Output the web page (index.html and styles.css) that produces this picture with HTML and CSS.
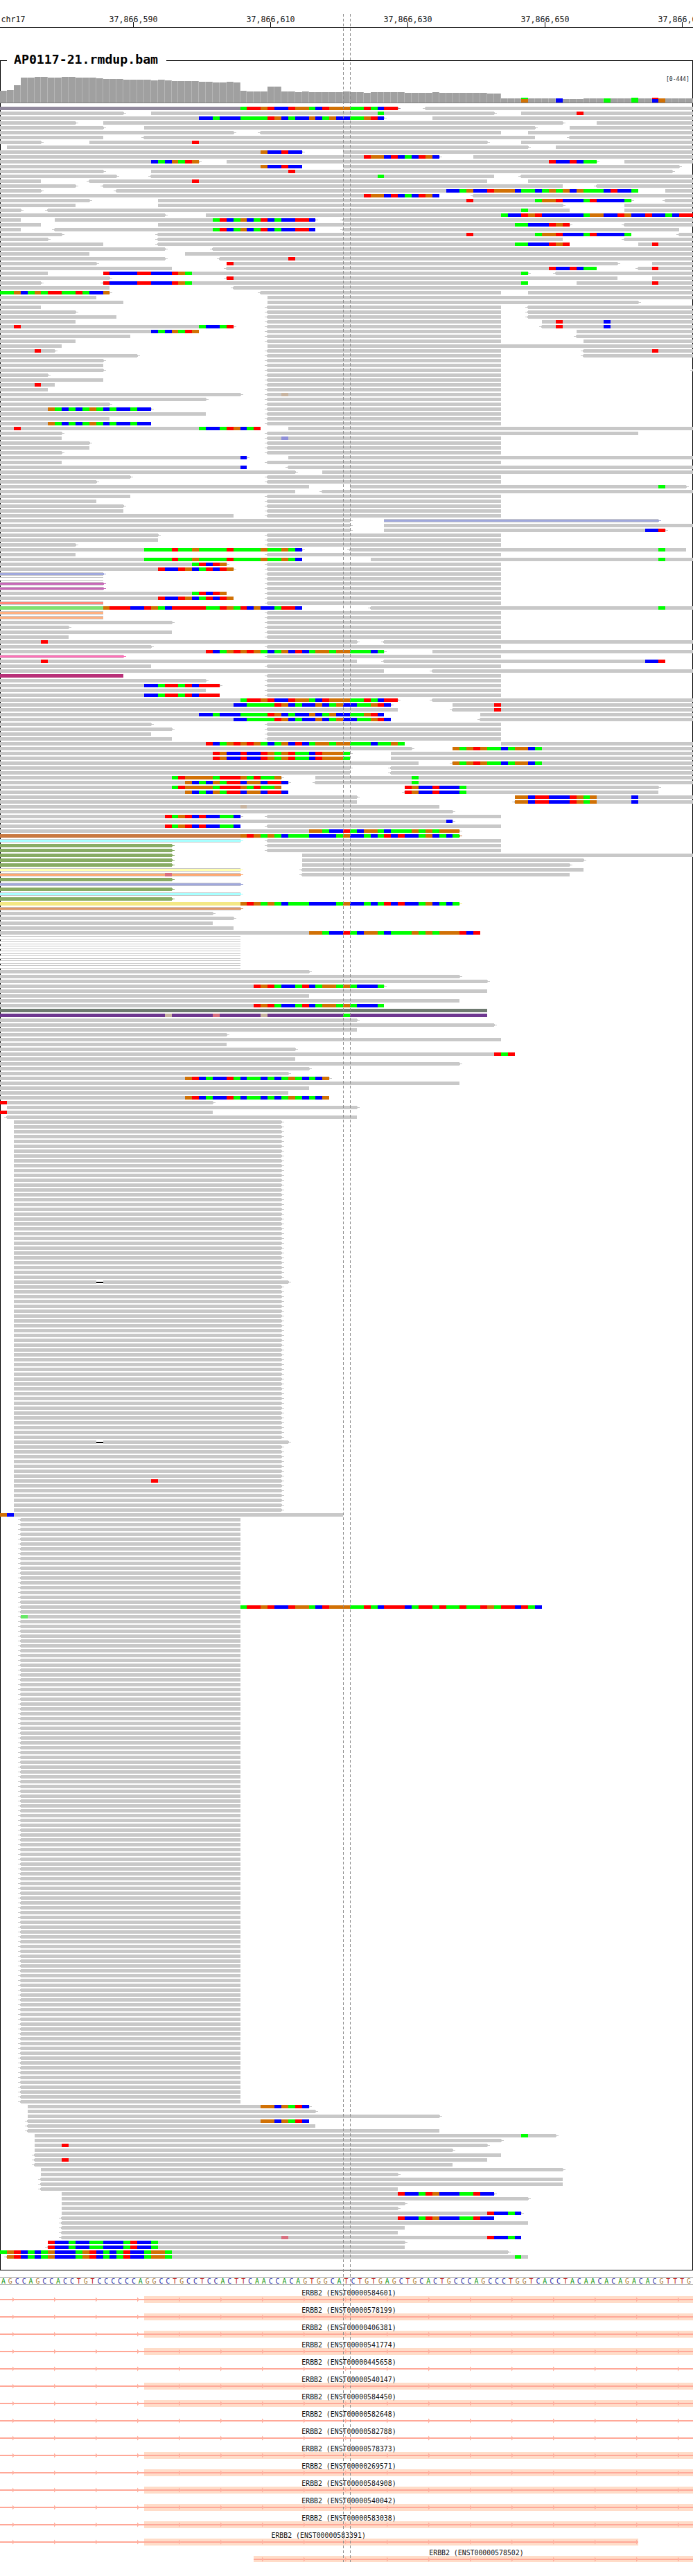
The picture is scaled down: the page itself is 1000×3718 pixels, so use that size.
FILE: index.html
```html
<!DOCTYPE html>
<html lang="en">
<head>
<meta charset="utf-8">
<title>IGV snapshot chr17</title>
<link rel="stylesheet" href="styles.css">
</head>
<body>
<main class="page">
  <svg class="ruler" width="1000" height="40" viewBox="0 0 1000 40">
    <text class="rtext" x="1.5" y="32">chr17</text>
    <g class="rticks">
      <text class="rtext mid" x="192.5" y="32">37,866,590</text><rect class="ink" x="192" y="32" width="1" height="7"/>
      <text class="rtext mid" x="390.5" y="32">37,866,610</text><rect class="ink" x="390" y="32" width="1" height="7"/>
      <text class="rtext mid" x="588.5" y="32">37,866,630</text><rect class="ink" x="588" y="32" width="1" height="7"/>
      <text class="rtext mid" x="786.5" y="32">37,866,650</text><rect class="ink" x="786" y="32" width="1" height="7"/>
      <text class="rtext mid" x="984.5" y="32">37,866,670</text><rect class="ink" x="984" y="32" width="1" height="7"/>
    </g>
    <rect class="ink" x="0" y="39" width="1000" height="1"/>
  </svg>

  <svg class="track" id="track" width="1000" height="3247" viewBox="0 40 1000 3247">
    <rect class="frame" x="0.5" y="87.5" width="999" height="3189"/>
    <rect class="paper" x="10" y="85" width="230" height="5"/>
    <text class="title" x="20" y="92">AP0117-21.rmdup.bam</text>
    <text class="range" x="961" y="117">[0-444]</text>
    <g id="coverage"></g>
    <g id="reads"></g>
  </svg>

  <div class="sequence" id="sequence"></div>

  <svg class="genes" id="genes" width="1000" height="420" viewBox="0 3298 1000 420"></svg>

  <svg class="cursor" width="1000" height="3718" viewBox="0 0 1000 3718">
    <line class="dash" x1="495.5" y1="20" x2="495.5" y2="3698"/>
    <line class="dash" x1="505.5" y1="20" x2="505.5" y2="3698"/>
  </svg>
</main>
<script src="app.js"></script>
</body>
</html>
```

FILE: styles.css
```css
html, body { margin: 0; padding: 0; background: #fff; }
body { width: 1000px; height: 3718px; overflow: hidden; font-family: "DejaVu Sans Mono", monospace; }
.page { position: relative; width: 1000px; height: 3718px; display: flex; flex-direction: column; overflow: hidden; }
svg { display: block; flex: none; }
.rtext { font: 11.6px "DejaVu Sans Mono", monospace; fill: #111; }
.mid { text-anchor: middle; }
.ink { fill: #000; shape-rendering: crispEdges; }
.frame { fill: none; stroke: #000; stroke-width: 1; shape-rendering: crispEdges; }
.paper { fill: #fff; }
.title { font: bold 18.2px "DejaVu Sans Mono", monospace; fill: #000; }
.range { font: 8px "DejaVu Sans Mono", monospace; fill: #222; }

#coverage rect, #reads rect, #reads polygon, .genes rect { shape-rendering: crispEdges; }
.cov { fill: #a0a0a0; }
.covgap { fill: #b6b6b6; }
.covline { fill: #808080; }

.read { fill: #c8c8c8; }
.bA { fill: #00ff00; }
.bC { fill: #0000ff; }
.bG { fill: #d17105; }
.bT { fill: #ff0000; }
.bt { fill: #c8b4a0; }
.br { fill: #d87080; }
.bb { fill: #9090d8; }
.bg { fill: #66e866; }
.delgap { fill: #fff; }
.delbar { fill: #000; }

.cp { fill: #928a9e; }
.cv { fill: #a0a8dc; }
.cw { fill: #fff; }
.cm { fill: #c868b8; }
.cs { fill: #ff8878; }
.cl { fill: #80e070; }
.co { fill: #ffb080; }
.ch { fill: #ff70b8; }
.cd { fill: #b83078; }
.cc { fill: #a8ffff; }
.ce { fill: #88ac64; }
.cy { fill: #ffffb0; }
.cf { fill: #ffa870; }
.cu { fill: #e09868; }
.ck { fill: #f4e884; }
.cn { fill: #c87840; }
.cx { fill: #6e7a70; }
.cz { fill: #6e3890; }

.sequence {
  flex: none;
  display: flex;
  width: 1000px;
  height: 11px;
  box-sizing: border-box;
  border-top: 1px solid #a8a8a8;
  border-bottom: 1px solid #a8a8a8;
  overflow: hidden;
  font: 9.85px/9px "DejaVu Sans Mono", monospace;
}
.base { flex: 0 0 9.9px; text-align: center; }
.base.A { color: #1c9c1c; }
.base.C { color: #3030a8; }
.base.G { color: #b07c34; }
.base.T { color: #c02424; }

.exon { fill: #ffdcc8; }
.intron { fill: #ffa898; }
.chev { fill: #ffb0a0; }
.gname { font: 9.85px "DejaVu Sans Mono", monospace; fill: #111; }

.cursor { position: absolute; left: 0; top: 0; pointer-events: none; }
.dash { stroke: #8c8c8c; stroke-width: 1; stroke-dasharray: 4 3; shape-rendering: crispEdges; }
```

FILE: app.js
```js
(function () {
  var PX = 9.9;
  function X(k) { return Math.round(k * PX); }

  /* ---------- coverage ---------- */
  var tops = [131,130,123,112,112,111,111,112,112,111,111,112,112,112,113,114,114,114,115,115,115,115,116,115,116,117,117,117,117,118,118,119,119,118,119,131,132,132,132,125,125,132,132,133,132,133,133,133,133,133,132,
    133,133,134,133,133,133,133,133,134,134,134,134,133,134,134,134,134,134,134,134,135,135,142,142,142,141,142,142,142,142,142,143,143,143,142,142,142,142,142,142,142,141,142,142,141,142,142,142,142,142];
  var over = { 76:[['bA',141,143],['bG',143,148]], 81:[['bC',142,148]], 88:[['bA',142,148]], 92:[['bA',141,148]], 95:[['bT',141,143],['bC',143,148]], 96:[['bG',142,148]] };
  var cov = '';
  tops.forEach(function (t, k) {
    var a = X(k), b = X(k + 1);
    cov += '<rect class="cov" x="' + a + '" y="' + t + '" width="' + (b - a) + '" height="' + (148 - t) + '"/>';
    cov += '<rect class="covgap" x="' + (b - 1) + '" y="' + t + '" width="1" height="' + (148 - t) + '"/>';
    if (over[k]) over[k].forEach(function (o) {
      cov += '<rect class="' + o[0] + '" x="' + a + '" y="' + o[1] + '" width="' + (b - a) + '" height="' + (o[2] - o[1]) + '"/>';
    });
  });
  cov += '<rect class="covline" x="0" y="148" width="1000" height="1"/>';
  document.getElementById('coverage').innerHTML = cov;

  /* ---------- recurring soft-clip sequences ---------- */
  var a = 'ATTGTCCTGGACTGGGAATACTT';
  var b = 'CCACCCAAAATGCACCGCAGCCAAGTC';
  var c = 'TGGCTCACTGC';
  var g9 = 'GCCTCC';
  var h1 = 'AGGTCCCATCCCCA';
  var s23 = 'ATCAGCATCACCTTC';
  var s24 = 'AACCCTGT';
  var s34 = 'TCCCCTTCCCTGA';
  var s62 = 'GACACAGACACCACC';
  var s91 = 'AAAATAAGAAAATAAAAGAAGAC';
  var s95 = 'TCCTGCATCTG';
  var s112 = 'TCAGTGTGACAGCTCAGGAGGAAAC';
  var s123 = 'CCAAAATGCACCGCAGCCAAGTC';
  var s132 = 'GAGTGAACAGGCA';
  var s133 = 'TGCCTCCTGAGTAACTGGGA';
  var s138 = 'ATGGGGATTTGATAAG';
  var s139 = 'GCACGATTCGGCTTC';
  var s140 = 'TGCCTCCCA';
  var s142 = 'GGCTTCCCTGAG';
  var s146 = 'TAGTCTCCAAC';
  var s149 = 'GGACCTACGGACAAAGAGAGGG';
  var s150 = 'GTGAGACAAACCCCAGCCACATCTCCAGCACA';
  var s181 = 'TGTACCATCAGGAGACCCA';
  var s200 = 'GTCACCTACAACACAGACACG';
  var s412 = 'GGCGATC';
  var s430 = 'TCCATGCCCAATCC';
  var s440 = 'TCCACCAACCCATCCA';
  var s442 = 'AGTCACAGCCCAGTCACATCCAGGA';

  /* start,end  < > = strand tip  :k=SEQ bases  #c solid  ~c inner colour  !k deletion  N* repeat */
  var table = `
0,58>:35=${a}#p <62,101
0,18> 22,72>:55=A 76,101:84=T
0,56>:29=${b} 63,101
0,11> 15,82> 87,101
0,15> 21,78> 83,101
0,34> <38,73 77,101
0,15 <21,78 <83,101
0,6> 13,71>:28=T 76,101
1,77> 81,101
0,44>:38=${g9} 50,101
0,64>:53=${c} 69,101
0,29>:22=CACGATG 33,87>:80=TCCTCAA 91,101
0,44:38=${g9} 50,99>
0,15> 22,98>:42=T
0,17> <22,72:55=A <76,101
0,6 <13,71:28=T 77,101
0,11> <15,82 <87,101
0,6> <17,93:65=CCAGCCTGGGCAACAGAGCGAAACTCCA 97,101
0,64:53=${c} <69,101
0,13> 23,92>:68=T:78=${h1} <97,101
0,11 23,82> 91,101
0,3> <7,83:76=A 91,101
0,24> 30,101:73=ACCTGTCCCCCCAGGCCTGCCTCCACTT
0,3 8,46>:31=${s23} <50,101
0,6 23,83>:75=${s24} <91,101
0,3 <8,46:31=${s23} <50,99
0,9> <23,92:68=T:78=${h1} <99,101
0,7> <23,82 <91,101
0,15 <23,83:75=${s24} 93,101:95=T
0,24> <31,101
0,13 27,101
0,24> <32,101:42=T
0,14> 33,90>:33=T 95,101
0,25 <33,87:80=TCCTCAA <93,101:95=T
0,7 15,77>:15=${s34}:76=A <81,101
0,16> <33,90:33=T 95,101
0,6> <15,77:15=${s34}:76=A 84,101:95=T
0,16 <34,101
0,16>:0=AAGCAGATTAATACCG <38,73 77,101
0,14 39,101
0,18 39,93>
0,6 <39,73 <77,101
0,11> <39,73 <77,101
0,17 <39,73 <77,101
0,11 <39,73 79,101:81=T:88=C
0,34>:2=T:29=ACCAT <39,73 <79,101:81=T:88=C
0,29:22=CACGATG <39,73 84,101
0,19 <39,73 <84,101
0,11 <39,73 85,101
0,9 39,101
0,8>:5=T <39,73 <85,101:95=T
0,20> <39,73 <85,101
0,15> <39,73
0,15 <39,73
0,15> <39,73 <101,102
0,7> <39,73
0,15 <39,73
0,8:5=T <39,73
0,7 <39,73
0,35> <39,73:41=t
0,30> <39,73
0,16> <39,73
0,22>:7=${s62} <39,73
0,30 <39,73
0,16 <39,73
0,22:7=${s62} <39,73
0,38:2=T:29=ACCATGCAT 42,101
0,9> <39,93
0,9 <39,73:41=b
0,13> <39,73
0,13 <39,73
0,9> <39,73
0,36>:35=C 42,101
0,9 <39,73
0,36:35=C <42,101
0,43> 47,101
0,19> <39,73
0,14> <39,73
0,45 51,100>:96=A
0,43 <47,101
0,19 <39,73
0,14 <39,73
0,18> <39,73
0,18 <39,73
0,34 <39,73
0,51> 56,96>~v
0,51> 56,101
0,51> 56,97>:94=CCT
0,23> <39,73
0,23 <39,73
0,11> <39,73
0,44>:21=${s91} <51,100:96=A
0,11 <39,73
0,44:21=${s91} 54,101:96=A
0,33>:28=ATCTG <39,73
0,34>:23=${s95} <39,73
0,15>~v <39,73
0,15>~w <39,73
0,15>~m <39,73
0,15>~m <39,73
0,33:28=ATCTG <39,73
0,34:23=${s95} <39,73
0,15~s <39,73
0,44:15=GTTTCCTGACTTTTTAATGATCGCCATTC#l <54,101:96=A
0,15~o <39,73
0,15~o <39,73
0,25> <39,73
0,10> <39,73
0,25 <39,73
0,10 <39,73
0,52>:6=T <56,101
0,22> <39,73
0,56>:30=${s112}A 63,101
0,18>~h <39,73
0,52:6=T <56,97:94=CCT
0,22 <39,73
0,56 <63,101
0,18#d <39,73
0,30> <39,73
0,32>:21=CCATTATCTTT <39,73
0,30 <39,73
0,32:21=CCATTATCTTT <39,73
0,58>:35=${a} <63,101
0,57>:34=${s123} 66,101:72=T
0,58 <66,101:72=T
0,56:29=${b} 70,101
0,57:34=${s123} <70,101
0,22> <39,73
0,25> <39,73
0,22 <39,73
0,25 <39,73
0,59:30=${s112}AAGA 73,101
0,60> 66,101:66=${s132}
0,51>:31=${s133} 57,101
0,51:31=${s133} 57,101
0,61 <66,101:66=${s132}
0,51> <57,101
0,51 <57,101
0,41>:25=${s138} 46,101:60=A
0,42>:27=${s139} <46,101:60=A
0,41:25=${s138} 59,96>:59=${s140}
0,42:27=${s139} <59,96:59=${s140}
0,52> 75,101:75=${s142}:92=C
0,52 <75,101:75=${s142}:92=C
0,64:35=t
0,66>
0,35>:24=${s146} <39,73
0,66>:65=C
0,35:24=${s146} <39,73
0,67>:45=${s149}
0,67>:35=${s150}#n
0,35>~c <39,73
0,25>#e <39,73
0,25>#e <39,73
0,25>#e 44,101
0,25>#e 44,85>
0,25>#e 44,83>
0,35>~y <44,85
0,35>~f:24=r <44,83
0,25>#e
0,35>~v
0,25>#e
0,35>~c
0,25>#e
0,67>:35=${s150}#k
0,35>~u
0,31>
0,34>
0,31
0,34
0,70:45=${s149}TCT
7*0,35~w
0,45>
0,67>
0,71>
0,56>:37=${s181}
0,71
0,45
0,67
0,56:37=${s181}
0,71#x
0,71#z:24=t:31=r:38=t:50=A
0,52>
0,72>
0,52
0,33>
0,73
0,33
0,43>
0,75:72=TAT
0,43
0,67>
0,45>
0,42>
0,48>:27=${s200}
0,67
0,45
0,42
0,48:27=${s200}
0,31>:0=T
1,52>
0,31:0=T
<1,52
33*2,41>
2,42>!14
32*2,41>
2,42>!14
7*2,41>
2,41>:22=T
6*2,41>
0,50:0=GC
18*<3,35
<3,79:35=${a}TCATTATAATAATGATTCTAC
<3,35
<3,35:3=g
100*<3,35
4,45>:38=${s412}
4,46>
4,64>
<4,45:38=${s412}
<4,46
<4,64
5,81>:76=A
5,73>
5,71>:9=T
5,66>
<5,73
<5,71:9=T
<5,66
6,82>
6,58>
<6,82
<6,82
<6,58
9,72>:58=${s430}
9,77>
9,59>
9,58>
9,76>:71=TCCAC
<9,72:58=${s430}
<9,77
<9,59
<9,58
<9,76:41=r:71=TCCAC
7,59>:7=${s440}
<7,59:7=${s440}
0,74>:0=${s442}
<1,77:1=${s442.slice(1)}:75=A`;

  function rect(cls, x, y, w, h) {
    return '<rect class="' + cls + '" x="' + x + '" y="' + y + '" width="' + w + '" height="' + h + '"/>';
  }
  function poly(cls, pts) {
    return '<polygon class="' + cls + '" points="' + pts + '"/>';
  }

  function drawRead(tok, y) {
    var m = /^(<?)(\d+),(\d+)(>?)(.*)$/.exec(tok);
    var x0 = X(+m[2]), x1 = X(+m[3]);
    if (x1 > 1000) x1 = 1000;
    var inner = '', bases = '', out = '';
    var re = /([:#~!])([^:#~!]+)/g, p;
    var main = 'read';
    while ((p = re.exec(m[5]))) {
      if (p[1] === '#') { main = 'c' + p[2]; }
      else if (p[1] === '~') { inner = 'c' + p[2]; }
      else if (p[1] === ':') {
        var kv = p[2].split('='), k = +kv[0], s = kv[1];
        for (var i = 0; i < s.length; i++) {
          var xa = X(k + i), xb = X(k + i + 1);
          bases += rect('b' + s[i], xa, y, xb - xa, 5);
        }
      } else if (p[1] === '!') {
        var da = X(+p[2]), db = X(+p[2] + 1);
        bases += rect('delgap', da, y, db - da, 5) + rect('delbar', da, y + 2, db - da, 2);
      }
    }
    out += rect(main, x0, y, x1 - x0, 5);
    if (inner) out += rect(inner, x0, y + 1, x1 - x0, 3);
    var tip = inner || main;
    if (m[1]) out += poly(tip, x0 + ',' + (y + 1) + ' ' + (x0 - 4) + ',' + (y + 2.5) + ' ' + x0 + ',' + (y + 4));
    if (m[4]) out += poly(tip, x1 + ',' + (y + 1) + ' ' + (x1 + 4) + ',' + (y + 2.5) + ' ' + x1 + ',' + (y + 4));
    return out + bases;
  }

  var html = '', row = 0;
  table.trim().split('\n').forEach(function (line) {
    var rep = /^(\d+)\*(.*)$/.exec(line), n = 1;
    if (rep) { n = +rep[1]; line = rep[2]; }
    for (var i = 0; i < n; i++) {
      var y = 154 + 7 * row;
      line.trim().split(/\s+/).forEach(function (t) { html += drawRead(t, y); });
      row++;
    }
  });
  document.getElementById('reads').innerHTML = html;

  /* ---------- reference sequence ---------- */
  var ref = 'AGCCAGCCACCTGTCCCCCCAGGCCTGCCTCCACTTCAACCACAGTGGCAT' +
            'CTGTGAGCTGCACTGCCCAGCCCTGGTCACCTACAACACAGACACGTTTG';
  document.getElementById('sequence').innerHTML = ref.split('').map(function (ch) {
    return '<span class="base ' + ch + '">' + ch + '</span>';
  }).join('');

  /* ---------- gene models ---------- */
  var genes = [
    ['584601', 435.3, 1, 208, 1000], ['578199', 435.3, 1, 208, 1000], ['406381', 435.3, 1, 208, 1000],
    ['541774', 435.3, 1, 208, 1000], ['445658', 435.3, 0, 0, 1000],  ['540147', 435.3, 1, 208, 1000],
    ['584450', 435.3, 1, 208, 1000], ['582648', 435.3, 0, 0, 1000],  ['582788', 435.3, 0, 0, 1000],
    ['578373', 435.3, 1, 208, 1000], ['269571', 435.3, 1, 208, 1000], ['584908', 435.3, 1, 208, 1000],
    ['540042', 435.3, 1, 208, 1000], ['583038', 435.3, 1, 208, 1000], ['583391', 391.5, 1, 208, 921],
    ['578502', 619.3, 1, 366, 1000]
  ];
  var svg = '';
  genes.forEach(function (g, i) {
    var yc = 3319 + 25 * i;
    var last = i === 15;
    var start = last ? 366 : 0, end = g[4];
    if (g[2]) svg += rect('exon', g[3], yc - 5, end - g[3], last ? 9 : 10);
    svg += rect('intron', start, yc - 1, end - start, 2);
    for (var x = 18; x < end; x += 60) {
      if (x < start) continue;
      svg += poly('chev', x + ',' + (yc - 3.5) + ' ' + (x + 3) + ',' + yc + ' ' + x + ',' + (yc + 3.5));
    }
    svg += '<text class="gname" x="' + g[1] + '" y="' + (yc - 6.4) + '">ERBB2 (ENST00000' + g[0] + ')</text>';
  });
  document.getElementById('genes').innerHTML = svg;
})();
```
